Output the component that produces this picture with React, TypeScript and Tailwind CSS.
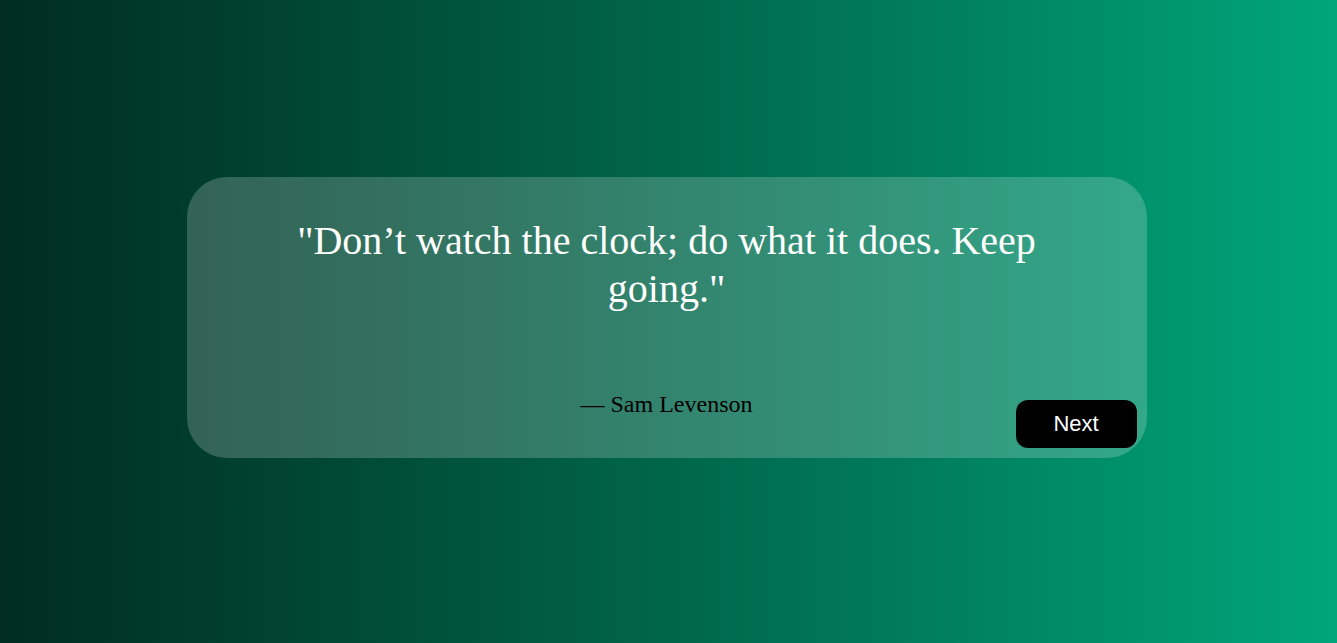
const App = () => {
  return (
    <div className="flex h-[643px] w-full items-center justify-center bg-gradient-to-r from-[#002d1f] to-[#00a67a] pr-[4px] pb-[9px]">
      <div className="relative w-[960px] rounded-[40px] bg-white/20 px-[100px] pt-[40px] pb-[40px] text-center font-['Liberation_Serif',serif]">
        <p className="text-[40px] leading-[48px] text-white">
          "Don’t watch the clock; do what it does. Keep going."
        </p>
        <p className="mt-[77px] text-[24px] leading-[28px] text-black">— Sam Levenson</p>
        <button className="absolute right-[10px] bottom-[10px] h-[48px] w-[121px] rounded-[12px] bg-black font-['Liberation_Sans',sans-serif] text-[22px] text-white">
          Next
        </button>
      </div>
    </div>
  );
};

export default App;
